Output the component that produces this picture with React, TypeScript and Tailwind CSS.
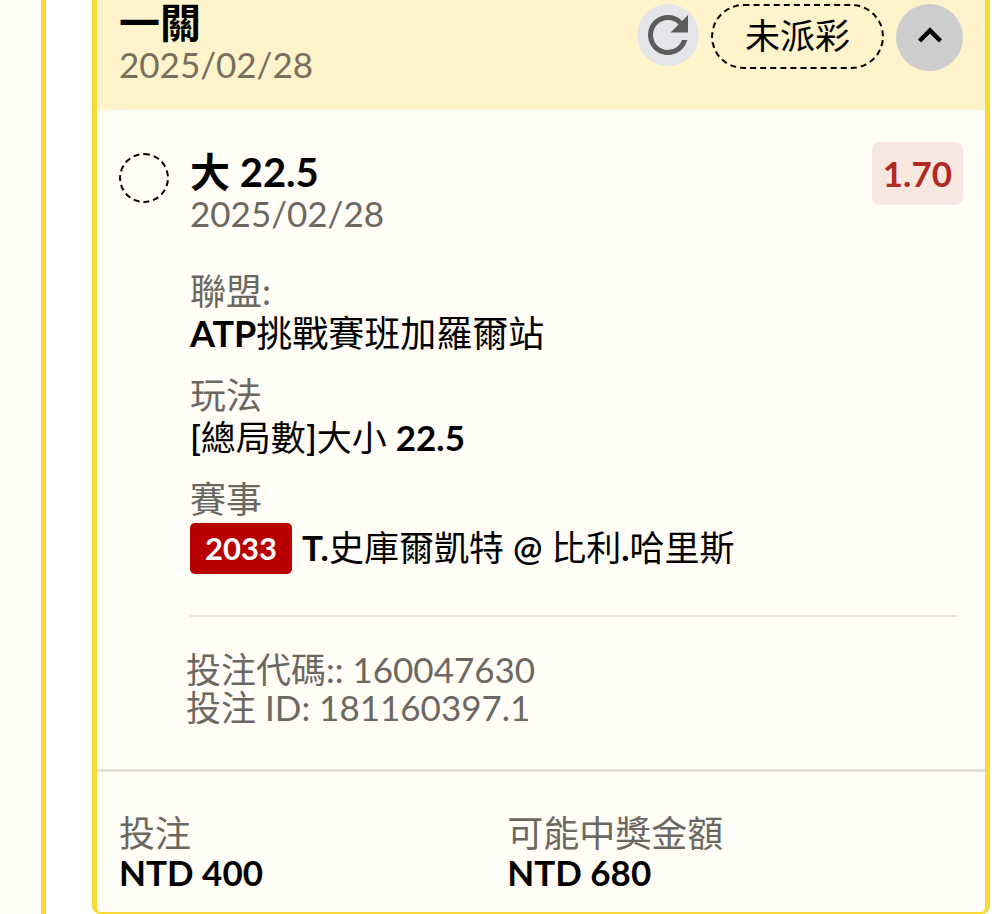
import type { ReactNode } from 'react';
import { MdRefresh } from 'react-icons/md';

interface DetailProps {
    label: string;
    children: ReactNode;
}

function Detail({ label, children }: DetailProps) {
    return (
        <div className="leading-[42px]">
            <dt className="text-[#6b6862]">{label}</dt>
            <dd>{children}</dd>
        </div>
    );
}

function Amount({ label, children }: DetailProps) {
    return (
        <div className="leading-[39px]">
            <dt className="text-[#6b6862]">{label}</dt>
            <dd className="text-[35px] font-bold">{children}</dd>
        </div>
    );
}

function ChevronUp() {
    return (
        <svg
            width="26"
            height="18"
            viewBox="0 0 26 18"
            fill="none"
            stroke="currentColor"
            strokeWidth="4.5"
            aria-hidden="true"
        >
            <path d="M2.5 15 13 4.5 23.5 15" />
        </svg>
    );
}

function CardHeader() {
    return (
        <header className="flex items-start justify-between bg-[#fef3cb] px-[22px] pb-7">
            <div>
                <h1 className="text-[41px] leading-[46px] font-bold">一關</h1>
                <p className="text-[35px] leading-9 text-[#766f5c]">
                    2025/02/28
                </p>
            </div>
            <div className="flex items-start gap-3 pt-1">
                <button
                    type="button"
                    aria-label="重新整理"
                    className="flex size-[62px] items-center justify-center rounded-full bg-[#e4e5e8] text-[#5c5c5c]"
                >
                    <MdRefresh size={60} />
                </button>
                <span className="flex h-[65px] items-center rounded-full border-2 border-dashed border-black px-8 pb-[2px] text-[35px]">
                    未派彩
                </span>
                <button
                    type="button"
                    aria-label="收合"
                    className="flex size-[67px] items-center justify-center rounded-full bg-[#cdcdcd] pb-[6px]"
                >
                    <ChevronUp />
                </button>
            </div>
        </header>
    );
}

function Selection() {
    return (
        <section className="flex gap-[21px] px-[22px] pt-8 pb-[43px]">
            <span className="mt-[11px] size-[50px] shrink-0 rounded-full border-2 border-dashed border-black" />
            <div className="min-w-0 flex-1">
                <div className="flex items-start justify-between">
                    <div className="pt-2">
                        <h2 className="text-[40px] leading-[44px] font-bold">
                            大 22.5
                        </h2>
                        <p className="text-[35px] leading-[38px] text-[#6b6862]">
                            2025/02/28
                        </p>
                    </div>
                    <span className="rounded-lg bg-[#f7e7e0] px-[11px] text-[35px] leading-[63px] font-bold text-[#b02a22]">
                        1.70
                    </span>
                </div>

                <dl className="mt-[38px] flex flex-col gap-5">
                    <Detail label="聯盟:">
                        <span className="font-bold">ATP</span>挑戰賽班加羅爾站
                    </Detail>
                    <Detail label="玩法">
                        <span className="text-[35px]">
                            <span className="font-semibold">[</span>總局數
                            <span className="font-semibold">]</span>大小{' '}
                            <span className="font-bold">22.5</span>
                        </span>
                    </Detail>
                    <Detail label="賽事">
                        <div className="mt-[3px] flex items-center gap-[10px]">
                            <span className="rounded-[5px] bg-[#b80000] px-[15px] text-[31px] leading-[51px] font-bold text-white">
                                2033
                            </span>
                            <span className="pb-[3px] text-[35px]">
                                <span className="font-bold">T.</span>史庫爾凱特{' '}
                                <span className="font-semibold">@</span> 比利
                                <span className="font-bold">.</span>哈里斯
                            </span>
                        </div>
                    </Detail>
                </dl>

                <hr className="mt-[41px] mr-[5px] border-t-2 border-[#e5e3dc]" />

                <div className="mt-[33px] -ml-1 text-[35px] leading-[38px] text-[#6b6862]">
                    <p>投注代碼:: 160047630</p>
                    <p>投注 ID: 181160397.1</p>
                </div>
            </div>
        </section>
    );
}

export default function App() {
    return (
        <div className="flex min-h-screen overflow-hidden bg-white pr-[9px] font-['Lato','Noto_Sans_CJK_TC',sans-serif] text-[36px] text-black">
            <aside className="w-[46px] shrink-0 border-r-[5px] border-[#f7da38] bg-[#fffdf5]" />
            <main className="ml-[46px] min-w-0 flex-1 rounded-b-lg border-x-[5px] border-b-2 border-[#f7da38] bg-[#fffdf5]">
                <CardHeader />
                <Selection />
                <dl className="flex border-t-[3px] border-[#e4e2db] px-[22px] pt-[42px] pb-5">
                    <div className="w-[46%]">
                        <Amount label="投注">NTD 400</Amount>
                    </div>
                    <Amount label="可能中獎金額">NTD 680</Amount>
                </dl>
            </main>
        </div>
    );
}
